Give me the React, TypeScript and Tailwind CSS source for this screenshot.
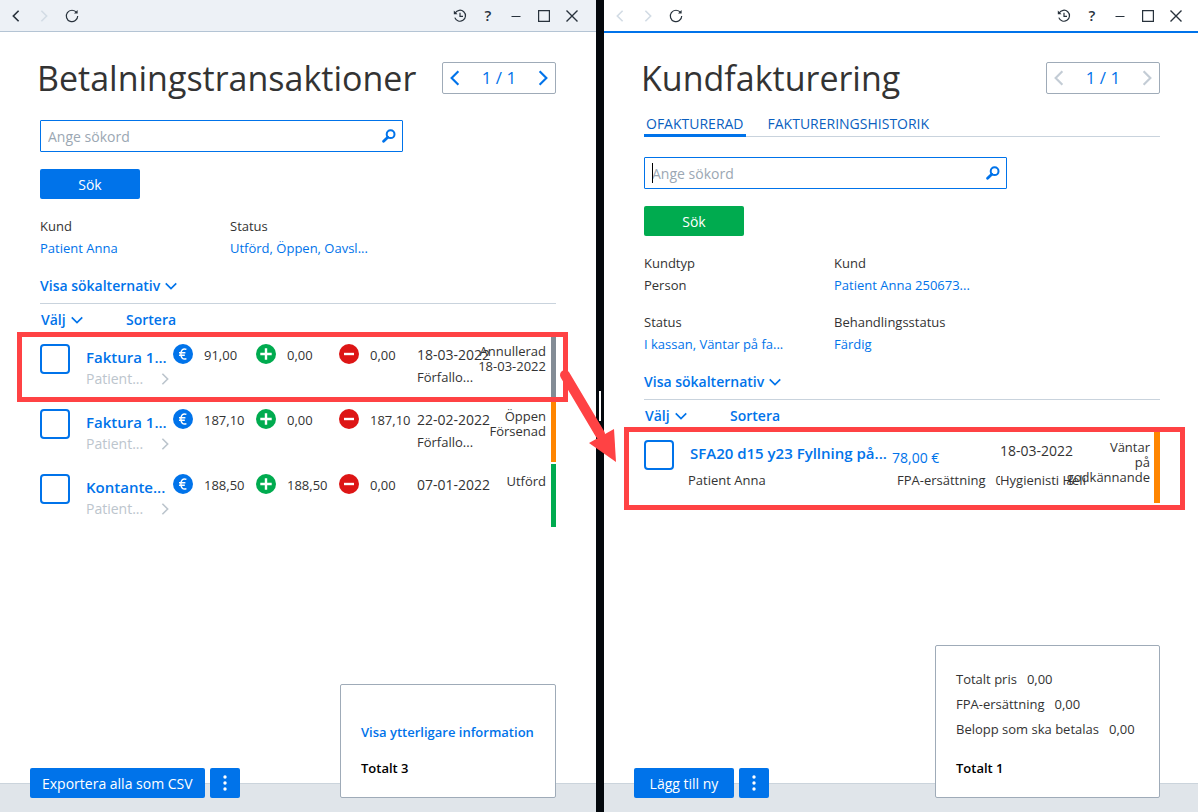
import type { ReactNode } from "react";

interface Payment {
  title: string;
  amount: string;
  paid: string;
  open: string;
  date: string;
  due: boolean;
  status: string[];
  bar: string;
}

const payments: Payment[] = [
  {
    title: "Faktura 1...",
    amount: "91,00",
    paid: "0,00",
    open: "0,00",
    date: "18-03-2022",
    due: true,
    status: ["Annullerad", "18-03-2022"],
    bar: "bg-[#838c95]",
  },
  {
    title: "Faktura 1...",
    amount: "187,10",
    paid: "0,00",
    open: "187,10",
    date: "22-02-2022",
    due: true,
    status: ["Öppen", "Försenad"],
    bar: "bg-[#ff8500]",
  },
  {
    title: "Kontante...",
    amount: "188,50",
    paid: "188,50",
    open: "0,00",
    date: "07-01-2022",
    due: false,
    status: ["Utförd"],
    bar: "bg-[#00ab4f]",
  },
];

const totals = [
  { label: "Totalt pris", value: "0,00" },
  { label: "FPA-ersättning", value: "0,00" },
  { label: "Belopp som ska betalas", value: "0,00" },
];

function Chevron({ d, className }: { d: "left" | "right" | "down"; className: string }) {
  const points = {
    left: "11,2 5,8 11,14",
    right: "5,2 11,8 5,14",
    down: "2,5 8,11 14,5",
  };
  return (
    <svg viewBox="0 0 16 16" fill="none" stroke="currentColor" strokeWidth="1.9" className={className}>
      <polyline points={points[d]} />
    </svg>
  );
}

function BarButton({ label, children }: { label: string; children: ReactNode }) {
  return (
    <button aria-label={label} className="flex h-7 w-7 items-center justify-center">
      {children}
    </button>
  );
}

function WindowBar({ className, canGoBack }: { className: string; canGoBack: boolean }) {
  return (
    <header className={`flex items-center justify-between pl-[2px] text-[#28323c] ${className}`}>
      <div className="flex">
        <BarButton label="Bakåt">
          <Chevron d="left" className={`h-[14px] w-[14px] ${canGoBack ? "" : "text-[#d3dce5]"}`} />
        </BarButton>
        <BarButton label="Framåt">
          <Chevron d="right" className="h-[14px] w-[14px] text-[#d3dce5]" />
        </BarButton>
        <BarButton label="Uppdatera">
          <svg viewBox="0 0 14 14" fill="none" stroke="currentColor" strokeWidth="1.2" className="h-[14px] w-[14px]">
            <path d="M11.6 3.6A5.7 5.7 0 1 0 12.7 7" />
            <path d="M12.6 1v3.6H9z" fill="currentColor" stroke="none" />
          </svg>
        </BarButton>
      </div>
      <div className="flex">
        <BarButton label="Historik">
          <svg viewBox="0 0 14 14" fill="none" stroke="currentColor" strokeWidth="1.2" className="h-[14px] w-[14px]">
            <path d="M2.2 4A5.5 5.5 0 1 1 1.8 8.6" />
            <path d="M.8 1.6v3.6h3.800z" fill="currentColor" stroke="none" />
            <path d="M7 3.8v3.6h3" />
          </svg>
        </BarButton>
        <BarButton label="Hjälp">
          <span className="text-[15px] font-semibold">?</span>
        </BarButton>
        <BarButton label="Minimera">
          <svg viewBox="0 0 12 12" stroke="currentColor" className="h-3 w-3">
            <path d="M1.5 6.5h9" />
          </svg>
        </BarButton>
        <BarButton label="Maximera">
          <svg viewBox="0 0 12 12" fill="none" stroke="currentColor" strokeWidth="1.2" className="h-3 w-3">
            <path d="M.6.6h10.8v10.8H.6z" />
          </svg>
        </BarButton>
        <BarButton label="Stäng">
          <svg viewBox="0 0 12 12" stroke="currentColor" strokeWidth="1.4" className="h-3 w-3">
            <path d="M.5.5l11 11M11.5.5l-11 11" />
          </svg>
        </BarButton>
      </div>
    </header>
  );
}

function TitleRow({ title, arrowColor }: { title: string; arrowColor: string }) {
  return (
    <div className="flex h-8 items-center justify-between">
      <h1 className="-ml-[3px] text-[34px] leading-8 whitespace-nowrap text-[#333]">{title}</h1>
      <div className="flex h-8 w-[114px] shrink-0 items-center justify-between rounded-[2px] border border-[#9fabb8] px-[3px] text-[#0073ea]">
        <button aria-label="Föregående sida" className={arrowColor}>
          <Chevron d="left" className="h-[18px] w-[18px]" />
        </button>
        <span className="text-[17px]">1 / 1</span>
        <button aria-label="Nästa sida" className={arrowColor}>
          <Chevron d="right" className="h-[18px] w-[18px]" />
        </button>
      </div>
    </div>
  );
}

function SearchForm({ id, buttonColor, focused }: { id: string; buttonColor: string; focused?: boolean }) {
  return (
    <form onSubmit={(e) => e.preventDefault()}>
      <div className="relative flex h-8 w-[363px] items-center rounded-[1px] border border-[#0073ea] pr-[6px]">
        {focused && <span className="absolute top-[5px] left-[7px] h-5 w-px bg-black" />}
        <input
          id={id}
          aria-label="Ange sökord"
          placeholder="Ange sökord"
          className="min-w-0 flex-1 pl-[7px] text-[14px] outline-none placeholder:text-[#9ba7b3]"
        />
        <svg viewBox="0 0 14 14" fill="none" stroke="#0073ea" className="h-[14px] w-[14px]">
          <circle cx="8.6" cy="5.2" r="3.9" strokeWidth="2" />
          <path d="M5.8 8.2L1.6 12.2" strokeWidth="2.8" strokeLinecap="round" />
        </svg>
      </div>
      <button className={`mt-[17px] h-[30px] w-[100px] rounded-[2px] text-[14px] text-white ${buttonColor}`}>
        Sök
      </button>
    </form>
  );
}

function Field({ label, value, link = true }: { label: string; value: string; link?: boolean }) {
  return (
    <div>
      <dt>{label}</dt>
      <dd>
        {link ? (
          <a href="#" className="text-[#0073ea]">
            {value}
          </a>
        ) : (
          value
        )}
      </dd>
    </div>
  );
}

function ListTools() {
  return (
    <div className="text-[14px] leading-[22px] font-semibold text-[#0073ea]">
      <button className="mt-4 flex items-center gap-1">
        Visa sökalternativ
        <Chevron d="down" className="h-[14px] w-[14px]" />
      </button>
      <div className="mt-[6px] flex border-t border-[#c9d3dd] pt-[5px]">
        <button className="flex w-[86px] items-center gap-1 pl-px">
          Välj
          <Chevron d="down" className="h-[14px] w-[14px]" />
        </button>
        <button>Sortera</button>
      </div>
    </div>
  );
}

function RowCheckbox({ label }: { label: string }) {
  return (
    <input
      type="checkbox"
      aria-label={label}
      className="mt-[10px] h-[30px] w-[30px] appearance-none rounded-[4px] border-2 border-[#0073ea] bg-white"
    />
  );
}

function Amount({ color, icon, value }: { color: string; icon: ReactNode; value: string }) {
  return (
    <div className="flex items-start gap-[11px] pt-[10px] leading-[22px]">
      <svg viewBox="0 0 20 20" className={`h-5 w-5 shrink-0 ${color}`}>
        <circle cx="10" cy="10" r="10" fill="currentColor" />
        {icon}
      </svg>
      {value}
    </div>
  );
}

const euro = (
  <path
    d="M13.4 5.400C9.800 3.800 7.900 6.700 7.900 10s1.900 6.200 5.500 4.600M6 8.700h6.400M6 11.300h5.800"
    fill="none"
    stroke="white"
    strokeWidth="1.4"
  />
);
const plus = <path d="M10 4.3v11.4M4.3 10h11.4" stroke="white" strokeWidth="2.4" />;
const minus = <path d="M5 10h10" stroke="white" strokeWidth="2.4" />;

function PaymentRow({ p }: { p: Payment }) {
  return (
    <li className="grid h-[63px] grid-cols-[46px_87px_83px_83px_78px_minmax(0,1fr)_66px_10px]">
      <RowCheckbox label={p.title} />
      <div className="pt-3">
        <a href="#" className="block text-[15px] leading-[22px] font-semibold whitespace-nowrap text-[#0073ea]">
          {p.title}
        </a>
        <div className="flex items-center justify-between pr-px text-[14px] leading-[22px] text-[#bcc5cd]">
          Patient...
          <Chevron d="right" className="h-[14px] w-[14px]" />
        </div>
      </div>
      <Amount color="text-[#0073ea]" icon={euro} value={p.amount} />
      <Amount color="text-[#00ab4f]" icon={plus} value={p.paid} />
      <Amount color="text-[#dd1515]" icon={minus} value={p.open} />
      <div className="pt-[10px] leading-[22px] whitespace-nowrap">
        <div className="text-[14px]">{p.date}</div>
        {p.due && <div>Förfallo...</div>}
      </div>
      <div className="flex flex-col items-end pt-[10px] leading-[15px] whitespace-nowrap">
        {p.status.map((s) => (
          <span key={s}>{s}</span>
        ))}
      </div>
      <div className={`ml-[5px] ${p.bar}`} />
    </li>
  );
}

function BottomArea({ action, children }: { action: string; children: ReactNode }) {
  return (
    <footer className="relative mt-auto">
      <div className="absolute inset-x-0 bottom-0 h-[29px] border-t border-[#cbd4dc] bg-[#e0e5ea]" />
      <div className="relative flex items-end justify-between pb-[14px] pl-[30px]">
        <div className="flex gap-[5px] text-[14px] text-white">
          <button className="h-[30px] min-w-[100px] rounded-[2px] bg-[#0073ea] px-3">{action}</button>
          <button
            aria-label="Fler åtgärder"
            className="flex h-[30px] w-[30px] items-center justify-center rounded-[2px] bg-[#0073ea]"
          >
            <svg viewBox="0 0 4 16" fill="currentColor" className="h-4 w-1">
              <circle cx="2" cy="2" r="1.7" />
              <circle cx="2" cy="8" r="1.7" />
              <circle cx="2" cy="14" r="1.7" />
            </svg>
          </button>
        </div>
        {children}
      </div>
    </footer>
  );
}

export default function App() {
  return (
    <div className="grid min-h-screen grid-cols-[596fr_8px_594fr] bg-white font-['Open_Sans','Noto_Sans',sans-serif] text-[13px] text-[#333]">
      {/* Payment transactions */}
      <section className="flex min-w-0 flex-col">
        <WindowBar className="h-8 border-b border-[#b4c4d4] bg-[#edf1f6] pr-[10px]" canGoBack />
        <div className="px-10 pt-[30px] pb-10">
          <TitleRow title="Betalningstransaktioner" arrowColor="text-[#0073ea]" />
          <div className="mt-[26px]">
            <SearchForm id="payment-search" buttonColor="bg-[#0073ea]" />
          </div>
          <dl className="mt-4 grid grid-cols-[190px_1fr] leading-[22px]">
            <Field label="Kund" value="Patient Anna" />
            <Field label="Status" value="Utförd, Öppen, Oavsl..." />
          </dl>
          <ListTools />
          <div className="relative mt-[3px]">
            <ul className="flex flex-col gap-[2px]">
              {payments.map((p) => (
                <PaymentRow key={p.date} p={p} />
              ))}
            </ul>
            <div className="pointer-events-none absolute -top-[2px] -right-3 -left-[23px] z-20 h-[70px] border-[5px] border-[#ff4244]">
              <svg viewBox="0 0 60 100" className="absolute top-[29px] -right-[53px] h-[100px] w-[60px]">
                <path d="M9 9L44 68" stroke="#ff4244" strokeWidth="10" strokeLinecap="round" />
                <path d="M60 96L33 77L58 63z" fill="#ff4244" />
              </svg>
            </div>
          </div>
        </div>
        <BottomArea action="Exportera alla som CSV">
          <div className="mr-10 min-w-[216px] rounded-[2px] border border-[#9fabb8] bg-white px-5 pt-9 pb-[18px] leading-[22px] font-semibold">
            <a href="#" className="block text-[#0073ea]">
              Visa ytterligare information
            </a>
            <p className="mt-[14px] text-black">Totalt 3</p>
          </div>
        </BottomArea>
      </section>

      {/* Split handle */}
      <div className="flex items-center justify-center bg-[#04080d]">
        <div className="h-[30px] w-[2px] bg-white" />
      </div>

      {/* Customer invoicing */}
      <section className="flex min-w-0 flex-col">
        <WindowBar className="h-[33px] border-b-2 border-[#0073ea] bg-white pr-2" canGoBack={false} />
        <div className="pt-[29px] pr-[38px] pb-10 pl-10">
          <TitleRow title="Kundfakturering" arrowColor="text-[#c3ccd5]" />
          <div role="tablist" className="mt-[18px] flex h-[25px] gap-5 border-b border-[#c9d3dd] text-[14px] text-[#0b5fc0]">
            <button role="tab" aria-selected="true" className="h-[25px] border-b-[3px] border-[#0073ea] px-[2px]">
              OFAKTURERAD
            </button>
            <button role="tab" aria-selected="false" className="h-[25px] border-b-[3px] border-transparent px-[2px]">
              FAKTURERINGSHISTORIK
            </button>
          </div>
          <div className="mt-5">
            <SearchForm id="invoice-search" buttonColor="bg-[#00ab4f]" focused />
          </div>
          <dl className="mt-4 grid grid-cols-[190px_1fr] gap-y-[15px] leading-[22px]">
            <Field label="Kundtyp" value="Person" link={false} />
            <Field label="Kund" value="Patient Anna 250673..." />
            <Field label="Status" value="I kassan, Väntar på fa..." />
            <Field label="Behandlingsstatus" value="Färdig" />
          </dl>
          <ListTools />
          <div className="relative mt-[3px]">
            <ul>
              <li className="grid h-[73px] grid-cols-[44px_204px_108px_minmax(0,1fr)_66px_10px] whitespace-nowrap">
                <RowCheckbox label="SFA20 d15 y23 Fyllning på..." />
                <div className="pt-3">
                  <a href="#" className="block pl-[2px] text-[15px] leading-[22px] font-semibold text-[#0073ea]">
                    SFA20 d15 y23 Fyllning på...
                  </a>
                  <div className="mt-[5px] leading-[22px]">Patient Anna</div>
                </div>
                <div className="overflow-hidden pt-[17px] leading-[22px]">
                  <div className="text-[14px] text-[#0073ea]">78,00 €</div>
                  <div className="flex gap-[10px] pl-[5px]">
                    <span>FPA-ersättning</span>
                    <span>0,00</span>
                  </div>
                </div>
                <div className="pt-[10px] leading-[22px]">
                  <div className="text-[14px]">18-03-2022</div>
                  <div className="mt-[7px]">Hygienisti Heli</div>
                </div>
                <div className="flex flex-col items-end pt-[10px] leading-[15px]">
                  <span>Väntar</span>
                  <span>på</span>
                  <span>godkännande</span>
                </div>
                <div className="ml-1 bg-[#ff8500]" />
              </li>
            </ul>
            <div className="pointer-events-none absolute -top-[3px] -right-[25px] -bottom-[7px] -left-5 z-10 border-[5px] border-[#ff4244]" />
          </div>
        </div>
        <BottomArea action="Lägg till ny">
          <div className="mr-[38px] min-w-[225px] rounded-[2px] border border-[#9fabb8] bg-white px-5 pt-[21px] pb-[18px]">
            {totals.map((t) => (
              <div key={t.label} className="flex gap-[10px] leading-[25px]">
                <span>{t.label}</span>
                <span>{t.value}</span>
              </div>
            ))}
            <p className="mt-[15px] leading-[22px] font-semibold text-black">Totalt 1</p>
          </div>
        </BottomArea>
      </section>
    </div>
  );
}
